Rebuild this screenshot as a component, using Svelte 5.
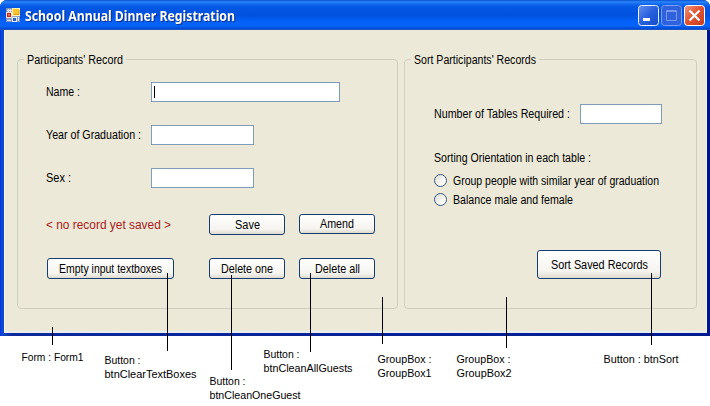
<script>
  const notes = [
    { x: 21.5, y: 361, lines: [['Form : Form1', 62]] },
    { x: 104.5, y: 364, lines: [['Button :', 36], ['btnClearTextBoxes', 92]] },
    { x: 209.5, y: 385, lines: [['Button :', 36], ['btnCleanOneGuest', 91]] },
    { x: 263.5, y: 358, lines: [['Button :', 36], ['btnCleanAllGuests', 89]] },
    { x: 377.5, y: 363, lines: [['GroupBox :', 54], ['GroupBox1', 54]] },
    { x: 456.5, y: 363, lines: [['GroupBox :', 54], ['GroupBox2', 55]] },
    { x: 603.5, y: 363, lines: [['Button : btnSort', 75]] }
  ];
  const leaders = [
    [52, 327, 345], [167, 273, 351], [231, 275, 370], [310, 273, 352],
    [382, 297, 344], [506, 297, 348], [651, 273, 345]
  ];
</script>

{#snippet label(text, width)}
  <svg class="label" {width} height="16"><text x="0" y="12" textLength={width} lengthAdjust="spacingAndGlyphs">{text}</text></svg>
{/snippet}

<div class="page">
  <div class="window">
    <header>
      <svg class="app-icon" width="15" height="15" viewBox="0 0 15 15">
        <rect x=".5" y=".5" width="13" height="13" fill="#8fa3c4" stroke="#8295b6" />
        <path d="M1 2.5h5M2.5 1v3M4.5 1v3" stroke="#dfe6f2" />
        <rect x=".5" y="4.5" width="5" height="5" fill="#c22a1c" stroke="#f3dcd8" />
        <rect x="2" y="6" width="2" height="2" fill="#e8694f" />
        <rect x="6.5" y=".5" width="7" height="7" fill="#fbc52d" stroke="#fff3b8" />
        <path d="M8 6.5h5V2" fill="none" stroke="#e39a13" />
        <rect x="6.5" y="9.5" width="4" height="4" fill="#2f62c8" stroke="#e2ecff" />
        <path d="M1 12.5h4M12.5 9v4" stroke="#dfe6f2" />
      </svg>
      <svg class="title" width="224" height="22"><text x="0" y="15" textLength="210" lengthAdjust="spacingAndGlyphs">School Annual Dinner Registration</text></svg>
      <div class="controls">
        <svg width="21" height="22" viewBox="0 0 21 22">
          <defs>
            <linearGradient id="blue" x2="1" y2="1"><stop stop-color="#648ff0" /><stop offset=".5" stop-color="#2860dc" /><stop offset="1" stop-color="#154bc8" /></linearGradient>
            <linearGradient id="red" x2="1" y2="1"><stop stop-color="#f09a7f" /><stop offset=".45" stop-color="#e25535" /><stop offset="1" stop-color="#c43b1c" /></linearGradient>
          </defs>
          <rect x=".5" y=".5" width="20" height="20" rx="3" fill="url(#blue)" stroke="#e8f0ff" />
          <rect x="5" y="13" width="7" height="3" fill="#fff" />
        </svg>
        <svg width="21" height="22" viewBox="0 0 21 22">
          <rect x=".5" y=".5" width="20" height="20" rx="3" fill="#2f62dc" stroke="#7d9eee" />
          <path d="M5.5 5.5h10v10h-10zM5 6.5h11" fill="none" stroke="#779bee" />
        </svg>
        <svg width="21" height="22" viewBox="0 0 21 22">
          <rect x=".5" y=".5" width="20" height="20" rx="3" fill="url(#red)" stroke="#fff" />
          <path d="M5.5 5.5l10 10M15.5 5.5l-10 10" stroke="#fff" stroke-width="2.2" />
        </svg>
      </div>
    </header>
    <main>
      <section class="group record">
        <h2>{@render label("Participants' Record", 96)}</h2>
        <div class="row">{@render label('Name :', 34)}<div class="input wide"><i></i></div></div>
        <div class="row">{@render label('Year of Graduation :', 95)}<div class="input"></div></div>
        <div class="row">{@render label('Sex :', 25)}<div class="input"></div></div>
        <div class="buttons">
          <span class="status">{@render label('< no record yet saved >', 125)}</span>
          <button>{@render label('Save', 25)}</button>
          <button class="short">{@render label('Amend', 34)}</button>
          <button class="empty">{@render label('Empty input textboxes', 103)}</button>
          <button>{@render label('Delete one', 52)}</button>
          <button>{@render label('Delete all', 45)}</button>
        </div>
      </section>
      <section class="group sort">
        <h2>{@render label("Sort Participants' Records", 122)}</h2>
        <div class="tables">{@render label('Number of Tables Required :', 136)}<div class="input"></div></div>
        <div class="orientation">{@render label('Sorting Orientation in each table :', 157)}</div>
        <div class="option"><span class="radio"></span>{@render label('Group people with similar year of graduation', 206)}</div>
        <div class="option"><span class="radio"></span>{@render label('Balance male and female', 120)}</div>
        <button>{@render label('Sort Saved Records', 97)}</button>
      </section>
    </main>
  </div>

  <svg class="callouts" width="710" height="406">
    {#each leaders as [x, top, bottom]}
      <rect {x} y={top} width="1" height={bottom - top} />
    {/each}
    {#each notes as note}
      {#each note.lines as [text, width], i}
        <text x={note.x} y={note.y + i * 14} textLength={width} lengthAdjust="spacingAndGlyphs">{text}</text>
      {/each}
    {/each}
  </svg>
</div>

<style>
  :global(body) { margin: 0; background: #fff; }
  * { box-sizing: border-box; }
  .page { position: relative; width: 710px; height: 406px; overflow: hidden; background: #fff; font: 12px "Liberation Sans", Arial, sans-serif; }
  .window {
    display: flex; flex-direction: column; width: 710px; height: 336px; padding: 0 3px 3px;
    border-radius: 7px 7px 0 0; background: linear-gradient(90deg, #0831d9 0, #0a4be0 2px, #1644ba 4px, #0a2a9c 12px, #001b90 706px, #00138c);
  }
  header {
    flex: none; display: flex; align-items: flex-start; height: 30px; margin: 0 -3px; padding: 5px 5px 0 6px; border-radius: 7px 7px 0 0;
    background: linear-gradient(#0a50d0 0, #2a86fa 2px, #1268ee 4px, #0358e3 7px, #0052de 15px, #0362fa 22px, #0563f8 26px, #0148ce 29px, #3c63ba 30px);
  }
  .app-icon { margin-top: 3px; }
  .title { margin: 1px 0 0 4px; font: bold 14.5px "Noto Sans", "Open Sans", sans-serif; fill: #fff; overflow: visible; filter: drop-shadow(1px 1px 0 #0b318f); }
  .controls { display: flex; gap: 2px; margin-left: auto; }
  svg { display: block; flex: none; }
  .label { overflow: visible; fill: #000; }
  main {
    flex: 1; display: flex; align-items: flex-start; gap: 6px; margin-left: 1px; padding: 29px 0 0 12px;
    background: #ece9d8; border-left: 1px solid #f4f3ec; border-right: 1px solid #f4f3ec; border-bottom: 2px solid #e8edf0;
  }
  .group { border: 1px solid #d0cfbf; border-radius: 4px; height: 250px; }
  .record { width: 381px; padding-left: 28px; }
  .sort { width: 293px; padding-left: 29px; }
  h2 { width: max-content; height: 16px; margin: -8px 0 0; padding: 0 3px; background: #ece9d8; font: inherit; }
  .record h2 { margin-left: -22px; }
  .sort h2 { margin-left: -23px; }
  .row { display: flex; align-items: flex-start; height: 20px; margin-bottom: 23px; }
  h2 + .row { margin-top: 14px; }
  .row .label { width: 105px; margin-top: 2px; }
  .input { width: 103px; height: 20px; border: 1px solid #7f9db9; background: #fff; }
  .wide { width: 189px; padding: 3px 2px; }
  .wide i { display: block; width: 1px; height: 12px; background: #000; }
  .buttons { display: grid; grid-template-columns: 163px 90px 76px; grid-template-rows: 44px 21px; margin-top: 26px; align-items: start; }
  .status { padding-top: 3px; }
  .status .label { fill: #a82018; }
  button {
    display: flex; align-items: center; justify-content: center; width: 76px; height: 21px; padding: 0;
    border: 1px solid #173d70; border-radius: 3px; background: linear-gradient(#fff, #f5f4ef 75%, #dedbd0); font: inherit;
  }
  .short { height: 20px; }
  .empty { width: 127px; margin-left: 1px; }
  .tables { display: flex; align-items: center; gap: 10px; height: 20px; margin-top: 36px; }
  .orientation { margin: 26px 0 5px; }
  .tables .input { width: 82px; }
  .option { display: flex; align-items: center; gap: 6px; height: 19px; }
  .radio { width: 13px; height: 13px; border: 1px solid #39577e; border-radius: 50%; background: linear-gradient(135deg, #dcdcd5, #fff 80%); }
  .sort button { width: 124px; height: 29px; margin: 41px 0 0 103px; }
  .callouts { position: absolute; inset: 0; pointer-events: none; font-size: 11.5px; }
</style>
